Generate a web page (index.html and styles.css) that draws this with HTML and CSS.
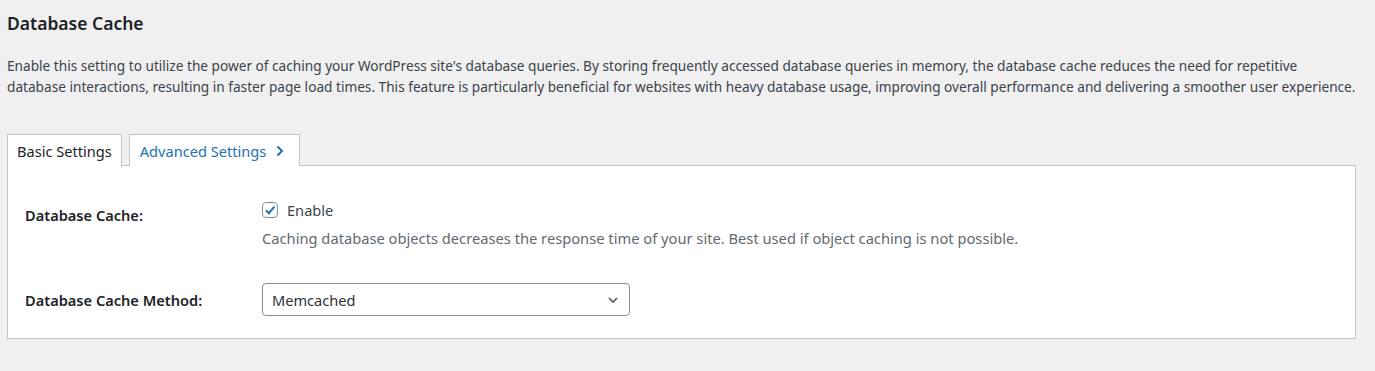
FILE: index.html
```html
<!DOCTYPE html>
<html lang="en">
	<head>
		<meta charset="UTF-8" />
		<title>Database Cache</title>
		<link rel="stylesheet" href="styles.css">
	</head>
	<body>
		<div class="wrap">
			<h2 class="page-title">Database Cache</h2>
			<p class="page-desc">
				Enable this setting to utilize the power of caching your WordPress site's database queries. By storing frequently accessed database queries in memory, the database cache reduces the need for repetitive<br />
				database interactions, resulting in faster page load times. This feature is particularly beneficial for websites with heavy database usage, improving overall performance and delivering a smoother user experience.
			</p>
			<div class="tabs">
				<a class="tab active">Basic Settings</a>
				<a class="tab tab-next">Advanced Settings
					<svg class="tab-arrow" viewBox="0 0 8 12" width="8" height="12">
						<path d="M1.5 1.5 L6 6 L1.5 10.5" fill="none" stroke="#2271b1" stroke-width="2" />
					</svg>
				</a>
			</div>
			<div class="panel">
				<div class="row">
					<div class="row-label">Database Cache:</div>
					<div class="row-field">
						<label class="check">
							<span class="check-box">
								<svg viewBox="0 0 16 16" width="16" height="16">
									<path d="M3.4 8.2 L6.8 11.6 L13 4.2" fill="none" stroke="#2271b1" stroke-width="2.4" />
								</svg>
							</span>
							Enable
						</label>
						<p class="field-desc">Caching database objects decreases the response time of your site. Best used if object caching is not possible.</p>
					</div>
				</div>
				<div class="row row-select">
					<div class="row-label">Database Cache Method:</div>
					<div class="row-field">
						<div class="select">
							<span>Memcached</span>
							<svg viewBox="0 0 12 12" width="12" height="12">
								<path d="M2 4 L6 8 L10 4" fill="none" stroke="#50575e" stroke-width="1.6" />
							</svg>
						</div>
					</div>
				</div>
			</div>
		</div>
	</body>
</html>
```

FILE: styles.css
```css
body {
	margin: 0;
	background: #f0f0f1;
	color: #1d2327;
	font-family: "Noto Sans", sans-serif;
	font-size: 14.6px;
}

.wrap {
	padding: 10px 19px 0 7px;
}

.page-title {
	font-size: 17.5px;
	font-weight: 600;
	margin: 0 0 19px;
	line-height: 26px;
	color: #1d2327;
}

.page-desc {
	margin: 0 0 37px;
	line-height: 21px;
	color: #3c434a;
	font-size: 13.65px;
}

.tabs {
	display: flex;
	gap: 7px;
	height: 32px;
}

.tab {
	display: flex;
	align-items: center;
	gap: 10px;
	padding: 0 9px;
	background: #fff;
	border: 1px solid #c3c4c7;
	border-bottom: none;
	color: #2271b1;
	height: 31px;
	position: relative;
	z-index: 1;
}

.tab.active {
	color: #1d2327;
	height: 32px;
}

.tab-next {
	padding: 0 15px 0 10px;
}

.tab-arrow {
	margin-top: 1px;
}

.panel {
	background: #fff;
	border: 1px solid #c3c4c7;
	margin-top: -1px;
	padding: 34px 17px 22px;
}

.row {
	display: flex;
}

.row-label {
	width: 237px;
	font-weight: 600;
	color: #1d2327;
	padding-top: 5px;
	line-height: 20px;
}

.row-field {
	flex: 1;
}

.check {
	display: flex;
	align-items: center;
	gap: 9px;
	color: #3c434a;
	height: 20px;
}

.check-box {
	width: 14px;
	height: 14px;
	border: 1px solid #8c8f94;
	border-radius: 4px;
	display: flex;
	align-items: center;
	justify-content: center;
	overflow: visible;
}

.field-desc {
	margin: 8px 0 0;
	color: #646970;
	line-height: 20px;
	font-size: 14.7px;
}

.row-select {
	margin-top: 35px;
	align-items: center;
}

.row-select .row-label {
	padding-top: 0;
}

.select {
	width: 368px;
	height: 33px;
	box-sizing: border-box;
	border: 1px solid #8c8f94;
	border-radius: 4px;
	display: flex;
	align-items: center;
	justify-content: space-between;
	padding: 0 10px 0 9px;
	color: #2c3338;
}
```
